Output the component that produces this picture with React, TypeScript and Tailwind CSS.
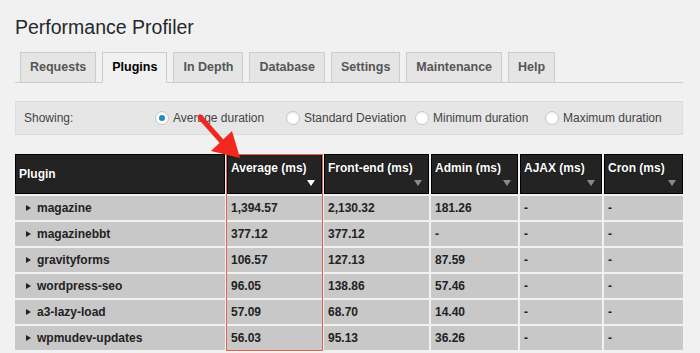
const tabs = ["Requests", "Plugins", "In Depth", "Database", "Settings", "Maintenance", "Help"];

const options = ["Average duration", "Standard Deviation", "Minimum duration", "Maximum duration"];

const columns = ["Average (ms)", "Front-end (ms)", "Admin (ms)", "AJAX (ms)", "Cron (ms)"];

const rows = [
  { name: "magazine", values: ["1,394.57", "2,130.32", "181.26", "-", "-"] },
  { name: "magazinebbt", values: ["377.12", "377.12", "-", "-", "-"] },
  { name: "gravityforms", values: ["106.57", "127.13", "87.59", "-", "-"] },
  { name: "wordpress-seo", values: ["96.05", "138.86", "57.46", "-", "-"] },
  { name: "a3-lazy-load", values: ["57.09", "68.70", "14.40", "-", "-"] },
  { name: "wpmudev-updates", values: ["56.03", "95.13", "36.26", "-", "-"] },
];

const gridCols = "grid grid-cols-[210px_95px_105px_87px_82px_79px] gap-x-[2px]";

export default function App() {
  return (
    <div className="relative h-[353px] bg-[#f1f1f1] px-[15px] pt-[15px] font-['Liberation_Sans',Arial,sans-serif] text-[#23282d] overflow-hidden">
      {/* Title */}
      <h1 className="text-[19.5px] leading-[24px] font-normal">Performance Profiler</h1>

      {/* Tabs */}
      <div className="mt-[13px] flex items-end gap-[6px] pl-[5px] border-b border-[#ccc] w-[668px]">
        {tabs.map((tab) => {
          const active = tab === "Plugins";
          return (
            <div
              key={tab}
              className={
                active
                  ? "-mb-px h-[31px] px-[9px] flex items-center border border-[#ccc] border-b-[#f1f1f1] bg-[#f1f1f1] text-[12.5px] font-bold text-black"
                  : "h-[30px] px-[9px] flex items-center border border-b-0 border-[#ccc] bg-[#e5e5e5] text-[12.5px] font-bold text-[#555]"
              }
            >
              {tab}
            </div>
          );
        })}
      </div>

      {/* Showing filter */}
      <div className="mt-[18px] w-[668px] h-[34px] flex items-center border border-[#dcdcdc] bg-[#e6e6e6] text-[12px] text-[#444]">
        <div className="w-[139px] pl-[8px]">Showing:</div>
        <div className="grid grid-cols-[131px_129px_130px_130px]">
          {options.map((opt, i) => (
            <div key={opt} className="flex items-center gap-[4px]">
              <span className="w-[14px] h-[14px] rounded-full border border-[#c4c7ca] bg-white flex items-center justify-center shadow-[inset_0_1px_2px_rgba(0,0,0,0.08)]">
                {i === 0 && <span className="w-[6px] h-[6px] rounded-full bg-[#1e8cbe]" />}
              </span>
              <span>{opt}</span>
            </div>
          ))}
        </div>
      </div>

      {/* Table */}
      <div className="relative mt-[19px] w-[668px]">
        <div className={gridCols}>
          <div className="h-[40px] bg-[#232323] border border-black flex items-center pl-[3px] text-[12px] font-bold text-white [text-shadow:0_0_1px_#000]">
            Plugin
          </div>
          {columns.map((col, i) => (
            <div
              key={col}
              className="relative h-[40px] bg-[#232323] border border-black pl-[3px] pt-[4px] text-[12px] font-bold text-white [text-shadow:0_0_1px_#000]"
            >
              {col}
              <span
                className={
                  i === 0
                    ? "absolute right-[6px] bottom-[7px] w-0 h-0 border-l-[4px] border-r-[4px] border-t-[6px] border-l-transparent border-r-transparent border-t-white"
                    : "absolute right-[6px] bottom-[7px] w-0 h-0 border-l-[4px] border-r-[4px] border-t-[6px] border-l-transparent border-r-transparent border-t-[#8a8a8a]"
                }
              />
            </div>
          ))}
        </div>

        <div className="mt-[2px] flex flex-col gap-y-[2px]">
          {rows.map((row) => (
            <div key={row.name} className={gridCols}>
              <div className="h-[24px] bg-[#c8c8c8] flex items-center pl-[11px] text-[12px] font-bold text-[#222]">
                <span className="w-0 h-0 border-t-[3.5px] border-b-[3.5px] border-l-[5px] border-t-transparent border-b-transparent border-l-[#222] mr-[6px]" />
                {row.name}
              </div>
              {row.values.map((v, j) => (
                <div key={j} className="h-[24px] bg-[#c8c8c8] flex items-center pl-[4px] text-[12px] font-bold text-[#222]">
                  {v}
                </div>
              ))}
            </div>
          ))}
        </div>

        {/* red highlight around Average column */}
        <div className="absolute left-[211px] top-0 w-[97px] h-[197px] border border-[#e8604c] pointer-events-none" />
      </div>

      {/* red arrow annotation */}
      <svg className="absolute left-0 top-0 pointer-events-none" width="700" height="353" viewBox="0 0 700 353">
        <line x1="200" y1="117" x2="224" y2="144" stroke="#f0281e" strokeWidth="5" strokeLinecap="round" />
        <polygon points="240,158 211,151 232,131" fill="#f0281e" />
      </svg>
    </div>
  );
}
